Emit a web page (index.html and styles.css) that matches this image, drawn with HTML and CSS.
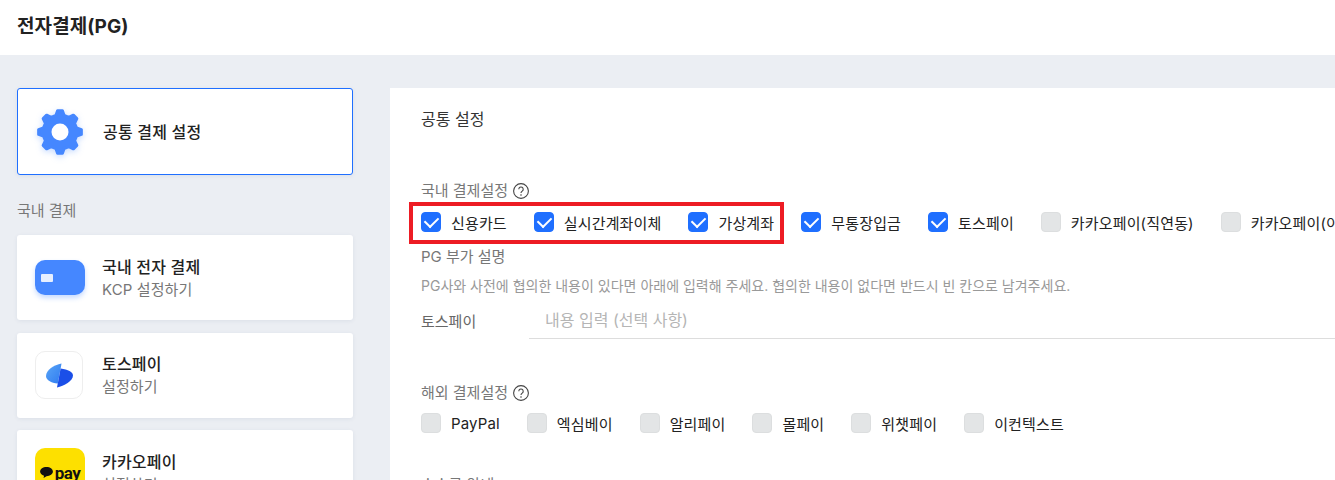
FILE: index.html
```html
<!DOCTYPE html>
<html lang="ko">

<head>
    <meta charset="UTF-8">
    <meta name="viewport" content="width=device-width, initial-scale=1.0">
    <title>전자결제(PG)</title>
    <link rel="stylesheet" href="styles.css">
</head>

<body>

    <!-- Page title -->
    <header class="top-bar">
        <h1>전자결제(PG)</h1>
    </header>

    <div class="layout">
        <!-- Left column: payment providers -->
        <aside class="side">
            <a class="card card-common">
                <svg class="gear" viewBox="0 0 48 48" width="48" height="48">
                    <path fill="#4587ff" stroke="#4587ff" stroke-width="3" stroke-linejoin="round" d="M26.43 2.640L28.11 7.510 32.760 9.430 37.380 7.170 40.830 10.620 38.570 15.240 40.490 19.890 45.360 21.570 45.360 26.430 40.490 28.110 38.570 32.760 40.830 37.380 37.380 40.830 32.760 38.570 28.110 40.490 26.430 45.360 21.570 45.360 19.890 40.490 15.240 38.570 10.620 40.830 7.170 37.380 9.430 32.760 7.510 28.110 2.640 26.430 2.640 21.570 7.510 19.890 9.430 15.240 7.170 10.620 10.620 7.170 15.240 9.430 19.890 7.510 21.570 2.640z"/>
                    <circle cx="24" cy="24" r="8.500" fill="#fff"/>
                </svg>
                <strong>공통 결제 설정</strong>
            </a>

            <p class="side-label">국내 결제</p>

            <a class="card card-pg">
                <span class="logo logo-card"><i></i></span>
                <span class="card-text"><strong>국내 전자 결제</strong><small>KCP 설정하기</small></span>
            </a>
            <a class="card card-pg">
                <span class="logo logo-toss">
                    <svg viewBox="0 0 27 25" width="27" height="25">
                        <defs>
                            <linearGradient id="tossLight" x1="0" y1="0" x2="1" y2="1">
                                <stop offset="0" stop-color="#5aa6f7"/>
                                <stop offset="1" stop-color="#2f7bf0"/>
                            </linearGradient>
                        </defs>
                        <path fill="url(#tossLight)" d="M15.500 0.500C8 2 0 7 0 13c0 4 5 7 11.750 7.500z"/>
                        <path fill="#1b4fe8" d="M14.600 5.500C22 6.500 27 9 27 12.500 27 18 18 23 11 24.500z"/>
                    </svg>
                </span>
                <span class="card-text"><strong>토스페이</strong><small>설정하기</small></span>
            </a>
            <a class="card card-pg">
                <span class="logo logo-kakao">
                    <svg viewBox="0 0 14 12" width="13" height="11"><path fill="#111" d="M7 0c3.900 0 7 2.200 7 5s-3.100 5-7 5l-3.200 2 .5-2.400C1.700 8.800 0 7 0 5c0-2.800 3.100-5 7-5z"/></svg>
                    <b>pay</b>
                </span>
                <span class="card-text"><strong>카카오페이</strong><small>설정하기</small></span>
            </a>
        </aside>

        <!-- Right column: common settings -->
        <main class="panel">
            <h2>공통 설정</h2>

            <div class="field-title first">국내 결제설정
                <svg class="help" viewBox="0 0 16 16" width="16" height="16"><circle cx="8" cy="8" r="7.400" fill="none" stroke="#444" stroke-width="1.100"/><path d="M5.800 6.200a2.200 2.200 0 1 1 3.400 1.900c-.8.500-1.200.9-1.200 1.900" fill="none" stroke="#444" stroke-width="1.100"/><circle cx="8" cy="12" r=".8" fill="#444"/></svg>
            </div>
            <div class="checks">
                <div class="red-box"></div>
                <label class="check"><span class="box on"></span>신용카드</label>
                <label class="check"><span class="box on"></span>실시간계좌이체</label>
                <label class="check"><span class="box on"></span>가상계좌</label>
                <label class="check"><span class="box on"></span>무통장입금</label>
                <label class="check"><span class="box on"></span>토스페이</label>
                <label class="check"><span class="box"></span>카카오페이(직연동)</label>
                <label class="check"><span class="box"></span>카카오페이(이니시스)</label>
            </div>

            <div class="field-title extra">PG 부가 설명</div>
            <p class="hint">PG사와 사전에 협의한 내용이 있다면 아래에 입력해 주세요. 협의한 내용이 없다면 반드시 빈 칸으로 남겨주세요.</p>
            <div class="input-row">
                <span class="input-label">토스페이</span>
                <input class="text-input" type="text" placeholder="내용 입력 (선택 사항)">
            </div>

            <div class="field-title overseas">해외 결제설정
                <svg class="help" viewBox="0 0 16 16" width="16" height="16"><circle cx="8" cy="8" r="7.400" fill="none" stroke="#444" stroke-width="1.100"/><path d="M5.800 6.200a2.200 2.200 0 1 1 3.400 1.900c-.8.500-1.200.9-1.200 1.900" fill="none" stroke="#444" stroke-width="1.100"/><circle cx="8" cy="12" r=".8" fill="#444"/></svg>
            </div>
            <div class="checks checks-overseas">
                <label class="check"><span class="box"></span>PayPal</label>
                <label class="check"><span class="box"></span>엑심베이</label>
                <label class="check"><span class="box"></span>알리페이</label>
                <label class="check"><span class="box"></span>몰페이</label>
                <label class="check"><span class="box"></span>위챗페이</label>
                <label class="check"><span class="box"></span>이컨텍스트</label>
            </div>

            <div class="field-title last">수수료 안내</div>
        </main>
    </div>

</body>

</html>
```

FILE: styles.css
```css
* {
    box-sizing: border-box;
}

html,
body {
    height: 480px;
    overflow: hidden;
}

body {
    margin: 0;
    background-color: #ebeef3;
    font-family: Inter, "Noto Sans CJK KR", sans-serif;
    font-size: 15px;
    color: #222;
}

.top-bar {
    height: 55px;
    padding: 0 17px;
    display: flex;
    align-items: center;
    background-color: #fff;
}

h1 {
    margin: 0 0 7px;
    font-size: 19px;
    font-weight: 700;
    letter-spacing: 0.1px;
    color: #222;
}

.layout {
    display: flex;
    align-items: flex-start;
    padding: 33px 0 0 17px;
    gap: 37px;
}

.side {
    width: 336px;
    flex-shrink: 0;
}

.card {
    display: flex;
    align-items: center;
    background-color: #fff;
    border-radius: 3px;
    box-shadow: 0 1px 4px rgba(40, 60, 100, 0.08);
}

.card strong {
    font-size: 16px;
    line-height: 22px;
    font-weight: 500;
    letter-spacing: 0.2px;
    color: #222;
}

.card-common {
    height: 87px;
    padding-left: 18px;
    gap: 19px;
    border: 1px solid #1f6fff;
}

.gear {
    filter: drop-shadow(0 2px 3px rgba(69, 135, 255, 0.3));
}

.side-label {
    margin: 26px 0 14px;
    font-size: 15px;
    line-height: 20px;
    color: #777;
}

.card-pg {
    height: 85px;
    margin-bottom: 12.5px;
    padding-left: 18px;
    gap: 17px;
}

.card-text {
    display: flex;
    flex-direction: column;
    gap: 2px;
}

.card-text small {
    font-size: 15px;
    line-height: 20px;
    letter-spacing: 0.1px;
    color: #777;
}

.logo {
    width: 50px;
    height: 50px;
    border-radius: 10px;
    display: flex;
    align-items: center;
    justify-content: center;
    flex-shrink: 0;
}

.logo-card {
    height: 35px;
    justify-content: flex-start;
    padding-left: 6px;
    background-color: #4587ff;
    box-shadow: 0 3px 5px rgba(69, 135, 255, 0.3);
}

.logo-card i {
    width: 12px;
    height: 8px;
    border-radius: 1px;
    background-color: #e6efff;
}

.logo-toss {
    width: 48px;
    height: 48px;
    margin-right: 2px;
    border: 1px solid #eee;
}

.logo-kakao {
    gap: 2px;
    background-color: #fde000;
}

.logo-kakao b {
    font-family: Roboto, sans-serif;
    font-size: 17px;
    font-weight: 700;
    letter-spacing: -0.5px;
    line-height: 16px;
    color: #111;
}

.panel {
    flex: 1;
    height: 420px;
    padding: 21px 0 0 31px;
    background-color: #fff;
    white-space: nowrap;
    overflow: hidden;
}

h2 {
    margin: 0;
    font-size: 16px;
    font-weight: 400;
    line-height: 20px;
    color: #333;
}

.field-title {
    display: flex;
    align-items: center;
    gap: 5px;
    font-size: 15px;
    line-height: 20px;
    color: #777;
}

.help {
    flex-shrink: 0;
}

.first {
    margin-top: 52px;
}

.extra {
    margin-top: 15px;
}

.overseas {
    margin-top: 44px;
}

.last {
    margin-top: 42px;
}

.checks {
    position: relative;
    display: flex;
    align-items: center;
    height: 20px;
    margin-top: 11px;
}

.checks-overseas {
    margin-top: 10px;
}

.check {
    display: flex;
    align-items: center;
    gap: 10px;
    margin-right: 27px;
    font-size: 15px;
    letter-spacing: 0.15px;
    color: #222;
    flex-shrink: 0;
}

.box {
    width: 20px;
    height: 20px;
    border-radius: 4px;
    background-color: #e3e5e6;
    border: 1px solid #dcdedf;
}

.box.on {
    position: relative;
    background-color: #1f6fff;
    border-color: #1f6fff;
}

/* white tick drawn from two borders */
.box.on::after {
    content: "";
    position: absolute;
    left: 3px;
    top: 3px;
    width: 11px;
    height: 7px;
    border-left: 2.500px solid #fff;
    border-bottom: 2.500px solid #fff;
    transform: rotate(-45deg);
}

.red-box {
    position: absolute;
    left: -12px;
    top: -10px;
    width: 375px;
    height: 42px;
    border: 4px solid #ed1c24;
}

.hint {
    margin: 10px 0 0;
    font-size: 14px;
    line-height: 18px;
    color: #999;
}

.input-row {
    display: flex;
    align-items: center;
    margin-top: 7px;
}

.input-label {
    width: 108px;
    flex-shrink: 0;
    color: #666;
}

.text-input {
    flex: 1;
    height: 37px;
    padding: 0 16px;
    border: 0;
    border-bottom: 1px solid #ddd;
    outline: none;
    font-family: inherit;
    font-size: 16px;
}

.text-input::placeholder {
    color: #b5b5b5;
}
```
